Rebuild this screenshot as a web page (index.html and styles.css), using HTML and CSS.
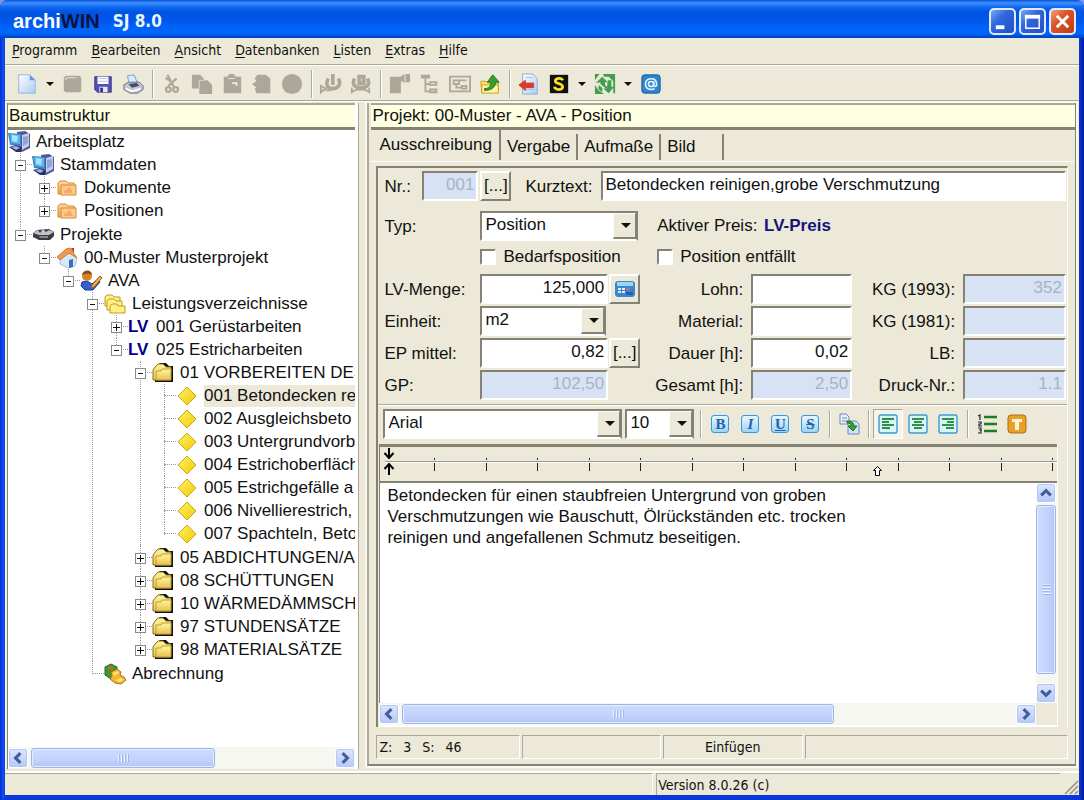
FILE: index.html
```
<!DOCTYPE html>
<html lang="de">
<head>
<meta charset="utf-8">
<title>archiWIN SJ 8.0</title>
<link rel="stylesheet" href="styles.css">
</head>
<body>
<svg class="defs" aria-hidden="true">
  <defs>
    <linearGradient id="gPaper" x1="0" y1="0" x2="1" y2="1"><stop offset="0" stop-color="#ffffff"/><stop offset="1" stop-color="#a9cdf5"/></linearGradient>
    <linearGradient id="gFolder" x1="0" y1="0" x2="0" y2="1"><stop offset="0" stop-color="#fff6a0"/><stop offset="1" stop-color="#e6c250"/></linearGradient>
    <linearGradient id="gOrange" x1="0" y1="0" x2="0" y2="1"><stop offset="0" stop-color="#ffd9a0"/><stop offset="1" stop-color="#f0a050"/></linearGradient>
    <linearGradient id="gDiamond" x1="0" y1="0" x2="1" y2="1"><stop offset="0" stop-color="#fff06a"/><stop offset="1" stop-color="#f0cc00"/></linearGradient>
    <symbol id="computer" viewBox="0 0 22 22">
      <path d="M9 1l8-1 5 3v14l-8 4-4-2z" fill="#4c5896"/><path d="M14 4l7-2v13l-7 4z" fill="#c3cdec"/><path d="M15 6l5-1v7l-5 3z" fill="#94a2d6"/>
      <path d="M0 2l13 1v12L2 14z" fill="#3a86c6"/><path d="M2 3l10 1v9L3 12z" fill="#58b8ee"/><path d="M4 4l6 1-1 6-5-1z" fill="#a9e4ff"/>
      <path d="M1 16l7-2 6 3-1 4H8z" fill="#28306a"/><path d="M3 16l5-1 4 2-4 2z" fill="#a3b0dc"/>
    </symbol>
    <symbol id="folderOrange" viewBox="0 0 22 22">
      <path d="M2 17V6l2-2h6l2 2h6l1 2v9z" fill="url(#gOrange)" stroke="#d98a35"/><path d="M5 8h15v10H5z" fill="#ffc98a" stroke="#d98a35"/><path d="M8 14l6-4 3 6H8z" fill="#f3aa70"/>
    </symbol>
    <symbol id="folderDark" viewBox="0 0 22 22">
      <path d="M3 20V9l3-6 2-2h6l3 3h4v16z" fill="#111"/>
      <path d="M1 18V8l3-4 2-2h5l3 3h5v4l-1 9z" fill="url(#gFolder)" stroke="#8a6d18"/><path d="M4 18V9h5l1-2h9v11z" fill="url(#gFolder)" stroke="#c49c2c"/>
    </symbol>
    <symbol id="diamond" viewBox="0 0 22 22"><path d="M11 2l9 9-9 9-9-9z" fill="url(#gDiamond)" stroke="#cfa510"/></symbol>
    <symbol id="chev" viewBox="0 0 10 10"><path d="M3 1l4 4-4 4" fill="none" stroke="#3f5f9a" stroke-width="2.6"/></symbol>
  </defs>
</svg>

<div class="window">
  <header class="titlebar">
    <h1 class="brand">archi<span class="brand-dark">WIN</span></h1>
    <span class="brand-version">SJ 8.0</span>
    <div class="window-buttons">
      <button class="winbtn" aria-label="Minimieren"><svg viewBox="0 0 24 24"><path d="M5 16h9v4H5z" fill="#fff"/></svg></button>
      <button class="winbtn" aria-label="Maximieren"><svg viewBox="0 0 24 24"><path d="M5 6h14v13H5z" fill="none" stroke="#fff" stroke-width="1.5"/><path d="M4 5h16v4H4z" fill="#fff"/></svg></button>
      <button class="winbtn winbtn-close" aria-label="Schließen"><svg viewBox="0 0 24 24"><path d="M6 6l12 12M18 6L6 18" stroke="#fff" stroke-width="3"/></svg></button>
    </div>
  </header>

  <nav class="menubar">
    <button><u>P</u>rogramm</button>
    <button><u>B</u>earbeiten</button>
    <button><u>A</u>nsicht</button>
    <button><u>D</u>atenbanken</button>
    <button><u>L</u>isten</button>
    <button><u>E</u>xtras</button>
    <button><u>H</u>ilfe</button>
  </nav>

  <div class="toolbar" role="toolbar" aria-label="Hauptleiste">
    <button aria-label="Neu"><svg viewBox="0 0 24 24"><path d="M3 2h12l6 6v14H3z" fill="url(#gPaper)" stroke="#8fb2e0"/><path d="M15 2v6h6z" fill="#5c9be8"/></svg></button>
    <button class="drop" aria-label="Neu Auswahl"></button>
    <button disabled aria-label="Öffnen"><svg viewBox="0 0 24 24"><path d="M4 3h15l2 2v15l-2 1H4l-2-2V5z" fill="#aca899"/><path d="M4 8V6l3-1h9" fill="none" stroke="#d8d4c4" stroke-width="1.5"/></svg></button>
    <button aria-label="Speichern"><svg viewBox="0 0 24 24"><path d="M3 4h18v17H6l-3-3z" fill="#5450b0" stroke="#3a3790"/><path d="M6 4h12v8H6z" fill="#fff"/><path d="M7 6h10M7 9h10" stroke="#b9bce8"/><path d="M8 15h9v6H8z" fill="#e4e6f4"/><path d="M9 16h3v5H9z" fill="#38348c"/></svg></button>
    <button aria-label="Drucken"><svg viewBox="0 0 24 24"><path d="M6 3l7-1 4 9-9 2z" fill="#d9ecff" stroke="#6a9fd8"/><path d="M2 13l5-3 12 0 4 4v4l-6 4H9l-7-4z" fill="#c5c5d2" stroke="#666a80"/><path d="M7 12l9-1 3 3-8 2z" fill="#4a4c60"/><path d="M4 17l7 3 9-3" fill="none" stroke="#fff" stroke-width="2"/></svg></button>
    <i class="sep"></i>
    <button disabled aria-label="Ausschneiden"><svg viewBox="0 0 24 24" fill="none" stroke="#aca899" stroke-width="2.4"><path d="M7 2l7 13M17 6l-9 8"/><circle cx="8" cy="18" r="2.6"/><circle cx="16" cy="18" r="2.6"/><path d="M5 5l5 4"/></svg></button>
    <button disabled aria-label="Kopieren"><svg viewBox="0 0 24 24" fill="#aca899"><path d="M1 2h9l4 4v11H1z"/><path d="M9 8h9l5 5v10H9z"/><path d="M9 17V8h5" fill="none" stroke="#dedac9"/></svg></button>
    <button disabled aria-label="Einfügen"><svg viewBox="0 0 24 24" fill="#aca899"><path d="M3 4h4l2-3h5l2 3h6v18H3z"/><path d="M8 6h7" stroke="#ece9d8"/><path d="M12 11h5v3" fill="none" stroke="#ece9d8" stroke-width="2"/></svg></button>
    <button disabled aria-label="Verschieben"><svg viewBox="0 0 24 24" fill="#aca899"><path d="M7 2h9l5 4v16H6l-2-5 2-1-5-4 5-3-2-3z"/></svg></button>
    <button disabled aria-label="Löschen"><svg viewBox="0 0 24 24"><circle cx="12" cy="12" r="11" fill="#aca899"/></svg></button>
    <i class="sep"></i>
    <button disabled aria-label="Verbinden"><svg viewBox="0 0 24 24" fill="none" stroke="#aca899" stroke-width="4"><path d="M14 1v12M9 6c-4 9 1 11 5 11s10-3 6-11"/><path d="M1 14v7l5-4zM6 19h6" stroke-width="2"/></svg></button>
    <button disabled aria-label="Trennen"><svg viewBox="0 0 24 24" fill="none" stroke="#aca899" stroke-width="4"><path d="M10 4h5v7h-5zM5 6c-4 8 2 10 7 10s11-2 7-10"/><path d="M2 16v5l5-3h9l5 3v-5" stroke-width="2"/></svg></button>
    <i class="sep"></i>
    <button disabled aria-label="Eigenschaften"><svg viewBox="0 0 24 24" fill="#aca899"><path d="M1 4h12v18H1zM11 5l6-4v10l-5-3zM18 1h5v9h-5z"/></svg></button>
    <button disabled aria-label="Baum"><svg viewBox="0 0 24 24" fill="none" stroke="#aca899" stroke-width="2"><path d="M3 3h8v2H3zM7 5v15h4M7 12h4M12 10h7v3h-7zM12 18h7v3h-7z"/></svg></button>
    <button disabled aria-label="Struktur"><svg viewBox="0 0 24 24" fill="none" stroke="#aca899" stroke-width="2"><path d="M1 4h22v16H1zM5 8h6v4H5zM14 14h5v3h-5zM8 12v4h6M11 8h8"/></svg></button>
    <button aria-label="Übergeordnet"><svg viewBox="0 0 24 24"><path d="M2 9h6l2 2h11v10H3z" fill="#ffe46a" stroke="#c89a1c"/><path d="M3 13h18v9H3z" fill="#fff2a0" stroke="#c89a1c"/><path d="M6 17c5 0 7-3 7-7H9l6-8 7 8h-4c0 6-5 9-12 9z" fill="#36a02c" stroke="#1f741b"/></svg></button>
    <i class="sep"></i>
    <button aria-label="Beenden"><svg viewBox="0 0 24 24"><path d="M5 1h11l5 5v17H5z" fill="url(#gPaper)" stroke="#93a9cf"/><path d="M8 5h8M8 18h9" stroke="#a7b9dc"/><path d="M1 13l7-5v3h9v5H8v3z" fill="#e03a28" stroke="#c84030"/></svg></button>
    <button aria-label="Sirados"><svg viewBox="0 0 24 24"><path d="M2 2h20v20H2z" fill="#111"/><path d="M16 8c-1-3-8-3-8 1 0 3 8 2 8 6s-8 4-9 0" fill="none" stroke="#f7e02c" stroke-width="3"/></svg></button>
    <button class="drop" aria-label="Sirados Auswahl"></button>
    <button aria-label="Aktualisieren"><svg viewBox="0 0 24 24" fill="#3f9e50"><path d="M1 1h5L1 8zM10 1h13v21h-2V9l-5-5h-5zM1 23V13l4 6 6 4z"/><path d="M2 11l7-7 6 6h-3v3l4 4h-3l-6-5v-2z"/><path d="M15 8h4v7h3l-6 7-6-5h4z"/><path d="M5 13v5l4 3V16z"/></svg></button>
    <button class="drop" aria-label="Aktualisieren Auswahl"></button>
    <button aria-label="Internet"><svg viewBox="0 0 24 24"><rect x="2" y="2" width="20" height="20" rx="3" fill="#2d86cd" stroke="#17548f"/><path d="M15 9v4c0 3 4 2 3-2-1-7-12-6-12 1 0 6 6 7 10 5" fill="none" stroke="#e3f4ff" stroke-width="1.7"/><circle cx="12" cy="12" r="2.8" fill="none" stroke="#e3f4ff" stroke-width="1.7"/></svg></button>
  </div>

  <main class="workspace">
    <section class="treepane">
      <h2 class="panehead">Baumstruktur</h2>
      <div class="treeview">
        <ul class="tree root">
          <li class="open">
            <div class="row"><svg class="ico"><use href="#computer"/></svg><span>Arbeitsplatz</span></div>
            <ul>
              <li class="open">
                <div class="row"><button class="exp" aria-label="Zuklappen"></button><svg class="ico"><use href="#computer"/></svg><span>Stammdaten</span></div>
                <ul>
                  <li><div class="row"><button class="exp plus" aria-label="Aufklappen"></button><svg class="ico"><use href="#folderOrange"/></svg><span>Dokumente</span></div></li>
                  <li><div class="row"><button class="exp plus" aria-label="Aufklappen"></button><svg class="ico"><use href="#folderOrange"/></svg><span>Positionen</span></div></li>
                </ul>
              </li>
              <li class="open">
                <div class="row"><button class="exp" aria-label="Zuklappen"></button><svg class="ico" viewBox="0 0 22 22"><path d="M1 9l4-3 12-1 5 3v4l-4 4H7l-6-3z" fill="#3c3c40"/><path d="M1 9l5-3 2 3 3-4 3 3 3-2 5 2-5 3H7z" fill="#c0c0c5"/><path d="M7 12h9v2H8z" fill="#85858c"/></svg><span>Projekte</span></div>
                <ul>
                  <li class="open">
                    <div class="row"><button class="exp" aria-label="Zuklappen"></button><svg class="ico" viewBox="0 0 22 22"><path d="M4 11l9-7 8 8-2 7-7 2-8-4z" fill="#d6e8fb" stroke="#a8c0e0"/><path d="M13 13l4-1v8l-4 1z" fill="#3f6cb4"/><path d="M1 10l9-8 4-1 7 10-8-5-9 7z" fill="#f09a50" stroke="#d8782c"/><path d="M15 1h3v5z" fill="#c23c20"/></svg><span>00-Muster Musterprojekt</span></div>
                    <ul>
                      <li class="open">
                        <div class="row"><button class="exp" aria-label="Zuklappen"></button><svg class="ico" viewBox="0 0 22 22"><path d="M2 12l5-1 5 3 6-5 2 3-7 8H5l-4-4z" fill="#2f62d0" stroke="#1b3d90"/><circle cx="7" cy="6" r="5" fill="#d9822c"/><path d="M2 5c1-6 10-6 10 0-4-2-7-1-10 0z" fill="#8a4a14"/><path d="M12 15l8-9 2 2-8 9-3 1z" fill="#f2b63a" stroke="#a2561a"/></svg><span>AVA</span></div>
                        <ul>
                          <li class="open">
                            <div class="row"><button class="exp" aria-label="Zuklappen"></button><svg class="ico" viewBox="0 0 22 22"><g fill="#fff08a" stroke="#c09a18"><path d="M1 13V4l2-2h5l2 2h6v9z"/><path d="M3 17V8l2-2h5l2 2h6v9z"/><path d="M6 20v-7l2-2h5l1 2h7v7z"/></g></svg><span>Leistungsverzeichnisse</span></div>
                            <ul>
                              <li><div class="row"><button class="exp plus" aria-label="Aufklappen"></button><b class="lv">LV</b><span>001 Gerüstarbeiten</span></div></li>
                              <li class="open">
                                <div class="row"><button class="exp" aria-label="Zuklappen"></button><b class="lv">LV</b><span>025 Estricharbeiten</span></div>
                                <ul>
                                  <li class="open">
                                    <div class="row"><button class="exp" aria-label="Zuklappen"></button><svg class="ico"><use href="#folderDark"/></svg><span>01 VORBEREITEN DES</span></div>
                                    <ul>
                                      <li><div class="row leaf"><svg class="ico"><use href="#diamond"/></svg><span class="selected">001 Betondecken re</span></div></li>
                                      <li><div class="row leaf"><svg class="ico"><use href="#diamond"/></svg><span>002 Ausgleichsbeto</span></div></li>
                                      <li><div class="row leaf"><svg class="ico"><use href="#diamond"/></svg><span>003 Untergrundvorbe</span></div></li>
                                      <li><div class="row leaf"><svg class="ico"><use href="#diamond"/></svg><span>004 Estrichoberfläch</span></div></li>
                                      <li><div class="row leaf"><svg class="ico"><use href="#diamond"/></svg><span>005 Estrichgefälle a</span></div></li>
                                      <li><div class="row leaf"><svg class="ico"><use href="#diamond"/></svg><span>006 Nivellierestrich,</span></div></li>
                                      <li><div class="row leaf"><svg class="ico"><use href="#diamond"/></svg><span>007 Spachteln, Beto</span></div></li>
                                    </ul>
                                  </li>
                                  <li><div class="row"><button class="exp plus" aria-label="Aufklappen"></button><svg class="ico"><use href="#folderDark"/></svg><span>05 ABDICHTUNGEN/AB</span></div></li>
                                  <li><div class="row"><button class="exp plus" aria-label="Aufklappen"></button><svg class="ico"><use href="#folderDark"/></svg><span>08 SCHÜTTUNGEN</span></div></li>
                                  <li><div class="row"><button class="exp plus" aria-label="Aufklappen"></button><svg class="ico"><use href="#folderDark"/></svg><span>10 WÄRMEDÄMMSCH</span></div></li>
                                  <li><div class="row"><button class="exp plus" aria-label="Aufklappen"></button><svg class="ico"><use href="#folderDark"/></svg><span>97 STUNDENSÄTZE</span></div></li>
                                  <li><div class="row"><button class="exp plus" aria-label="Aufklappen"></button><svg class="ico"><use href="#folderDark"/></svg><span>98 MATERIALSÄTZE</span></div></li>
                                </ul>
                              </li>
                            </ul>
                          </li>
                          <li><div class="row leaf"><svg class="ico" viewBox="0 0 22 22"><path d="M1 4l6-3 6 3v8l-6 4-6-4z" fill="#3f9a34" stroke="#1f6a1c"/><path d="M3 5l4-2 3 2-3 2z" fill="#d9622c"/><path d="M7 9l6-3 4 3-1 3 4 2 2 3-5 4-6-1-5-4 2-3z" fill="#f2b632" stroke="#a4701a"/><path d="M9 10l4-2 2 2-5 3zM12 17l5-2 3 2-5 2z" fill="#ffe27a"/></svg><span>Abrechnung</span></div></li>
                        </ul>
                      </li>
                    </ul>
                  </li>
                </ul>
              </li>
            </ul>
          </li>
        </ul>
      </div>
      <div class="scroll-h">
        <button class="sb" aria-label="Nach links"><svg class="left"><use href="#chev"/></svg></button>
        <div class="track"><div class="thumb thumb-tree"><i class="gripper"></i></div></div>
        <button class="sb" aria-label="Nach rechts"><svg><use href="#chev"/></svg></button>
      </div>
    </section>

    <section class="mainpane">
      <h2 class="panehead">Projekt: 00-Muster - AVA - Position</h2>
      <div class="frame">
        <div class="tabs" role="tablist">
          <button role="tab" aria-selected="true" class="tab active">Ausschreibung</button>
          <button role="tab" class="tab">Vergabe</button>
          <button role="tab" class="tab">Aufmaße</button>
          <button role="tab" class="tab tab-wide">Bild</button>
        </div>
        <div class="page">
          <div class="sheet">
            <form class="form">
              <div class="nrline">
                <label class="nrlabel" for="nr">Nr.:</label>
                <input class="field nr num" id="nr" value="001" disabled>
                <button type="button" class="more" aria-label="Nummer wählen">[...]</button>
                <label class="kurzlabel" for="kurz">Kurztext:</label>
                <input class="field kurz" id="kurz" value="Betondecken reinigen,grobe Verschmutzung">
              </div>
              <div class="fields">
                <label for="typ">Typ:</label>
                <span class="combo"><select class="field" id="typ"><option>Position</option></select></span>
                <p class="wide">Aktiver Preis: <b>LV-Preis</b></p>
              </div>
              <div class="fields checks">
                <label class="check check-first"><input type="checkbox">Bedarfsposition</label>
                <label class="check wide"><input type="checkbox">Position entfällt</label>
              </div>
              <div class="fields">
                <label for="menge">LV-Menge:</label>
                <span class="pair"><input class="field num" id="menge" value="125,000"><button type="button" class="more" aria-label="Rechner"><svg viewBox="0 0 22 22"><path d="M1 5l2-2h16l2 2v12l-2 2H3l-2-2z" fill="#3b87cc"/><path d="M3 4h16v4H3z" fill="#9fd4f5"/><g fill="#d9efff"><path d="M4 10h3v2H4zM8 10h3v2H8zM4 13h3v2H4zM8 13h3v2H8z"/></g><path d="M12 10h4v2h-4z" fill="#d06080"/><path d="M12 14h7v3h-7z" fill="#2560a8"/></svg></button></span>
                <label class="r" for="lohn">Lohn:</label><input class="field num" id="lohn">
                <label class="r" for="kg93">KG (1993):</label><input class="field num" id="kg93" value="352" disabled>

                <label for="einheit">Einheit:</label>
                <span class="combo combo-short"><select class="field" id="einheit"><option>m2</option></select></span>
                <label class="r" for="material">Material:</label><input class="field num" id="material">
                <label class="r" for="kg81">KG (1981):</label><input class="field num" id="kg81" disabled>

                <label for="ep">EP mittel:</label>
                <span class="pair"><input class="field num" id="ep" value="0,82"><button type="button" class="more" aria-label="EP wählen">[...]</button></span>
                <label class="r" for="dauer">Dauer [h]:</label><input class="field num" id="dauer" value="0,02">
                <label class="r" for="lb">LB:</label><input class="field num" id="lb" disabled>

                <label for="gp">GP:</label>
                <span class="pair pair-single"><input class="field num" id="gp" value="102,50" disabled></span>
                <label class="r" for="gesamt">Gesamt [h]:</label><input class="field num" id="gesamt" value="2,50" disabled>
                <label class="r" for="druck">Druck-Nr.:</label><input class="field num" id="druck" value="1.1" disabled>
              </div>
            </form>

            <div class="formatbar" role="toolbar" aria-label="Format">
              <span class="combo combo-font"><select class="field" aria-label="Schriftart"><option>Arial</option></select></span>
              <span class="combo combo-size"><select class="field" aria-label="Schriftgröße"><option>10</option></select></span>
              <i class="sep"></i>
              <button class="letter" aria-label="Fett"><b>B</b></button>
              <button class="letter" aria-label="Kursiv"><em>I</em></button>
              <button class="letter" aria-label="Unterstrichen"><u>U</u></button>
              <button class="letter" aria-label="Durchgestrichen"><s>S</s></button>
              <i class="sep"></i>
              <button aria-label="Text übernehmen"><svg viewBox="0 0 22 22"><path d="M2 1h6l3 3v7H2z" fill="#e8f0ff" stroke="#6f86c0"/><path d="M4 5h5M4 8h5" stroke="#6f86c0"/><path d="M10 8h8l3 3v10H10z" fill="#cfe3fa" stroke="#6f86c0"/><path d="M9 8c5 0 7 2 7 5h3l-4 5-5-5h3c0-2-1-3-4-3z" fill="#37a030" stroke="#1f7420"/></svg></button>
              <i class="sep"></i>
              <button class="pressed" aria-label="Linksbündig"><svg viewBox="0 0 22 22"><rect x="2" y="2" width="18" height="18" rx="2" fill="#d9f4fb" stroke="#3a9cd0" stroke-width="1.4"/><path d="M5 6h12M5 9h7M5 12h12M5 15h8" stroke="#2a9442" stroke-width="1.8"/></svg></button>
              <button aria-label="Zentriert"><svg viewBox="0 0 22 22"><rect x="2" y="2" width="18" height="18" rx="2" fill="#d9f4fb" stroke="#3a9cd0" stroke-width="1.4"/><path d="M5 6h12M7 9h8M5 12h12M7 15h8" stroke="#2a9442" stroke-width="1.8"/></svg></button>
              <button aria-label="Rechtsbündig"><svg viewBox="0 0 22 22"><rect x="2" y="2" width="18" height="18" rx="2" fill="#d9f4fb" stroke="#3a9cd0" stroke-width="1.4"/><path d="M5 6h12M10 9h7M5 12h12M9 15h8" stroke="#2a9442" stroke-width="1.8"/></svg></button>
              <i class="sep"></i>
              <button aria-label="Nummerierung"><svg viewBox="0 0 22 22"><path d="M8 4h13M8 11h13M8 18h13" stroke="#1f7a24" stroke-width="2.4"/><path d="M2 3l2-1v5M2 9h3v2H3v2h3M2 15h3v5H2M3 17h2" fill="none" stroke="#1c2440" stroke-width="1.2"/></svg></button>
              <button aria-label="Textbaustein"><svg viewBox="0 0 22 22"><rect x="2" y="2" width="18" height="18" rx="3" fill="#e8a02c" stroke="#b06c10"/><path d="M6 6h10v3h-3v8H9V9H6z" fill="#fff3cf"/></svg></button>
            </div>

            <div class="editor">
              <div class="ruler">
                <svg viewBox="0 0 678 34" preserveAspectRatio="xMinYMid slice" aria-hidden="true">
                  <path d="M5 14.500h673" stroke="#9a978a"/><path d="M5 15.500h673" stroke="#fff"/>
                  <path d="M54.500 11v2M106.500 11v2M157.500 11v2M209.500 11v2M260.500 11v2M312.500 11v2M363.500 11v2M415.500 11v2M466.500 11v2M518.500 11v2M569.500 11v2M621.500 11v2M672.500 11v2M54.500 16v8M106.500 16v8M157.500 16v8M209.500 16v8M260.500 16v8M312.500 16v8M363.500 16v8M415.500 16v8M466.500 16v8M518.500 16v8M569.500 16v8M621.500 16v8M672.500 16v8" stroke="#222"/>
                  <path d="M9 1v10M4.500 6l4.500 5 4.500-5M9 28V18M4.500 22l4.500-5 4.500 5" fill="none" stroke="#000" stroke-width="2"/>
                  <path d="M493.500 23.500l4-4 4 4h-2v5h-4v-5z" fill="#fff" stroke="#000"/>
                </svg>
              </div>
              <div class="editbody">
                <textarea class="text" aria-label="Langtext" spellcheck="false" wrap="off">Betondecken für einen staubfreien Untergrund von groben
Verschmutzungen wie Bauschutt, Ölrückständen etc. trocken
reinigen und angefallenen Schmutz beseitigen.</textarea>
                <div class="scroll-v">
                  <button class="sb" aria-label="Nach oben"><svg class="up"><use href="#chev"/></svg></button>
                  <div class="track"><div class="thumb"><i class="gripper"></i></div></div>
                  <button class="sb" aria-label="Nach unten"><svg class="down"><use href="#chev"/></svg></button>
                </div>
              </div>
              <div class="scroll-h scroll-text">
                <button class="sb" aria-label="Nach links"><svg class="left"><use href="#chev"/></svg></button>
                <div class="track"><div class="thumb thumb-text"><i class="gripper"></i></div></div>
                <button class="sb" aria-label="Nach rechts"><svg><use href="#chev"/></svg></button>
              </div>
            </div>
          </div>
          <div class="editstatus">
            <span class="cell cell-pos"><span>Z:</span><span>3</span><span>S:</span><span>46</span></span>
            <span class="cell"></span>
            <span class="cell cell-mode">Einfügen</span>
            <span class="cell cell-rest"></span>
          </div>
        </div>
      </div>
    </section>
  </main>

  <footer class="statusbar">
    <span class="stat-left"></span>
    <span class="stat-right">Version 8.0.26 (c)</span>
    <svg class="grip" viewBox="0 0 16 16" aria-hidden="true"><path d="M2 15L15 2M7 15l8-8M12 15l3-3" stroke="#9a917c" stroke-width="1.6"/></svg>
  </footer>
</div>
</body>
</html>
```
FILE: styles.css
```
:root {
  --face: #ece9d8;
  --shadow: #aca899;
  --dark: #858174;
  --off: #d7e3f5;
  --ui: "DejaVu Sans Condensed", "Noto Sans", sans-serif;
}

* { box-sizing: border-box; }

body {
  margin: 0;
  font: 17px/20px "Liberation Sans", Arial, sans-serif;
  color: #111;
  background: #8b8fe0;
}

button, input, select, textarea { font: inherit; color: inherit; }
button { padding: 0; border: 0; background: none; }
h1, h2, p, ul { margin: 0; padding: 0; }
ul { list-style: none; }
.defs { position: absolute; width: 0; height: 0; }

.window {
  display: flex;
  flex-direction: column;
  height: 100vh;
  min-height: 720px;
  padding: 0 5px 5px;
  background: linear-gradient(90deg, #0a28d8, #0a50ee 3px, #0a50ee 4px, #0838d8 5px, #0838d8 calc(100% - 5px), #0a34d0 calc(100% - 4px), #001a9c);
  border-radius: 8px 8px 0 0;
}

/* Title bar */
.titlebar {
  display: flex;
  align-items: center;
  flex: none;
  height: 38px;
  margin: 0 -5px;
  padding: 4px 8px 0 13px;
  border-radius: 8px 8px 0 0;
  background: linear-gradient(#0a50d8, #3c90ff 3px, #1068f0 7px, #0054e3 12px, #0056e8 20px, #0066ff 30px, #0062f8 34px, #0040b8);
}
.brand { font-size: 20px; line-height: 20px; color: #fff; }
.brand-dark { color: #0a1440; }
.brand-version { margin-left: 13px; font: bold 17px/20px var(--ui); color: #e8f6ff; }
.window-buttons { display: flex; gap: 3px; margin-left: auto; }
.winbtn {
  width: 27px;
  height: 27px;
  border: 2px solid #dfe9ff;
  border-radius: 5px;
  background: linear-gradient(135deg, #7ba4f4, #2f66dc 40%, #2350c4);
}
.winbtn svg { display: block; width: 23px; height: 23px; }
.winbtn-close { background: linear-gradient(135deg, #f0a080, #dc5428 40%, #c03c14); }

/* Menu and toolbar */
.menubar {
  display: flex;
  flex: none;
  gap: 14px;
  height: 28px;
  padding: 0 7px 3px;
  background: var(--face);
  border-bottom: 1px solid #fff;
  box-shadow: inset 0 -1px var(--shadow);
  font: 14px/18px var(--ui);
}
.menubar u { text-underline-offset: 2px; }
.toolbar {
  display: flex;
  align-items: center;
  flex: none;
  height: 36px;
  padding: 0 7px;
  background: var(--face);
  border-bottom: 1px solid #fff;
  box-shadow: inset 0 -1px var(--shadow);
}
.toolbar button { flex: none; width: 30px; height: 30px; }
.toolbar button svg { display: block; width: 22px; height: 22px; margin: 0 auto; }
.toolbar .drop { width: 16px; }
.drop::before {
  content: "";
  display: block;
  width: 0;
  margin: 0 auto;
  border: 4px solid transparent;
  border-top-color: #111;
  border-bottom: 0;
}
.sep {
  flex: none;
  width: 9px;
  height: 28px;
  background: linear-gradient(90deg, transparent 4px, var(--shadow) 4px, var(--shadow) 5px, #fff 5px, #fff 6px, transparent 6px);
}

/* Panes */
.workspace {
  display: flex;
  flex: 1;
  min-height: 0;
  padding: 1px 0 2px;
  background: var(--face);
}
.panehead {
  flex: none;
  height: 27px;
  padding: 0 1px;
  background: #ffffe1;
  border-top: 2px solid var(--shadow);
  border-bottom: 3px solid var(--dark);
  font-size: 17px;
  font-weight: normal;
  line-height: 22px;
}
.treepane {
  display: flex;
  flex-direction: column;
  flex: 0 0 33%;
  min-width: 0;
  padding-right: 3px;
  border-left: 2px solid #f6f4ea;
  box-shadow: inset 1px 0 var(--dark);
  padding-left: 1px;
  background: #fff;
  border-right: 1px solid var(--shadow);
}
.treeview { flex: 1; min-height: 0; overflow: hidden; background: #fff; }
.mainpane {
  display: flex;
  flex-direction: column;
  flex: 1;
  min-width: 0;
  margin: 0 3px 3px 8px;
  padding-left: 2px;
  border-left: 2px solid var(--shadow);
  border-right: 1px solid var(--dark);
  border-bottom: 2px solid var(--dark);
  outline: 2px solid #faf8f0;
}

/* Tree */
.tree ul ul { padding-left: 24px; }
.tree li { position: relative; }
.tree li.open + li { padding-top: 1px; }
.tree ul li::before {
  content: "";
  position: absolute;
  top: 0;
  bottom: 0;
  left: 12px;
  border-left: 1px dotted #999;
}
.tree ul li:last-child::before { bottom: auto; height: 13px; }
.row { display: flex; align-items: center; height: 23px; white-space: nowrap; }
.tree ul .row::before {
  content: "";
  position: absolute;
  left: 12px;
  width: 12px;
  border-top: 1px dotted #999;
}
.row .ico, .row .lv { flex: none; width: 22px; height: 22px; margin-right: 6px; }
.row .lv { color: #00008b; line-height: 22px; }
.row.leaf { padding-left: 24px; }
.exp {
  position: relative;
  flex: none;
  width: 11px;
  height: 11px;
  margin: 2px 6px 0 7px;
  border: 1px solid #8a8a8a;
  background: linear-gradient(#111, #111) center / 5px 1px no-repeat #fff;
}
.exp.plus {
  background: linear-gradient(#111, #111) center / 7px 1px no-repeat, linear-gradient(#111, #111) center / 1px 7px no-repeat, #fff;
}
.selected { flex: 1; background: #ece9d8; line-height: 22px; }

/* Scroll bars */
.scroll-h { display: flex; flex: none; height: 22px; padding: 1px 0; background: #f7f7f2; }
.scroll-v { display: flex; flex-direction: column; flex: none; width: 21px; background: #f7f7f2; }
.sb {
  flex: none;
  width: 20px;
  height: 20px;
  border: 1px solid #fff;
  border-radius: 3px;
  background: linear-gradient(#dce6fe, #b5c8f8);
  box-shadow: inset 0 0 0 1px #b4c6f4;
}
.sb svg { display: block; width: 12px; height: 12px; margin: 0 auto; }
.sb .left { transform: rotate(180deg); }
.sb .up { transform: rotate(-90deg); }
.sb .down { transform: rotate(90deg); }
.track { flex: 1; min-height: 0; min-width: 0; }
.thumb {
  display: flex;
  align-items: center;
  justify-content: center;
  height: 100%;
  border: 1px solid #9fb5ea;
  border-radius: 3px;
  background: linear-gradient(#cfdcfe, #c2d2fd 60%, #b2c6f6);
  box-shadow: inset 0 0 0 1px #e4ecff;
}
.gripper {
  width: 11px;
  height: 8px;
  background: repeating-linear-gradient(90deg, #eef4ff 0, #eef4ff 1px, #a2b6e6 1px, #a2b6e6 2px, transparent 2px, transparent 3px);
}
.thumb-tree { width: 60%; margin-left: 3px; }
.thumb-text { width: 70%; margin-left: 3px; }
.scroll-v .track { padding: 2px 1px 0 0; }
.scroll-v .thumb { height: 95%; background: linear-gradient(90deg, #cfdcfe, #c2d2fd 60%, #b2c6f6); }
.scroll-v .gripper { transform: rotate(90deg); }

/* Tabs */
.frame {
  display: flex;
  flex-direction: column;
  flex: 1;
  min-height: 0;
  padding-right: 1px;
}
.tabs { display: flex; align-items: flex-end; flex: none; height: 31px; padding-bottom: 1px; }
.tab { height: 26px; padding: 0 6px; border-right: 2px solid var(--dark); line-height: 26px; }
.tab.active { height: 30px; padding: 0 7px 0 8px; }
.tab-wide { padding-right: 26px; }
.page {
  display: flex;
  flex-direction: column;
  flex: 1;
  min-height: 0;
  padding: 4px 6px 5px 5px;
  border-top: 1px solid #fff;
}
.sheet {
  display: flex;
  flex-direction: column;
  flex: 1;
  min-height: 0;
  border-top: 2px solid var(--dark);
  border-left: 2px solid var(--dark);
  border-right: 1px solid #fff;
}

/* Form */
.form { padding: 3px 1px 4px 6px; border-bottom: 1px solid var(--shadow); }
.field {
  width: 100%;
  min-width: 0;
  height: 30px;
  margin: 0;
  padding: 0 3px 2px;
  border: 2px solid #fff;
  border-top-color: var(--dark);
  border-left-color: var(--dark);
  border-radius: 0;
  outline: 0;
  background: #fff;
}
.field:disabled { background: var(--off); color: #a9b2c2; -webkit-text-fill-color: #a9b2c2; opacity: 1; }
.num { text-align: right; padding-right: 2px; }
.nrline { display: flex; align-items: center; margin-bottom: 10px; }
.nrlabel { width: 38px; padding-top: 2px; }
.nr { width: 56px; flex: none; margin-right: 2px; }
.kurzlabel { margin: 0 8px 0 14px; padding-top: 2px; }
.kurz { flex: 1; }
.more {
  flex: none;
  width: 31px;
  height: 30px;
  border: 2px solid #fff;
  border-right-color: var(--dark);
  border-bottom-color: var(--dark);
  background: var(--face);
}
.more svg { display: block; width: 22px; height: 22px; margin: 0 auto; }
.fields {
  display: grid;
  grid-template-columns: 88px minmax(0, 160fr) 95px minmax(0, 101fr) 95px minmax(0, 103fr);
  gap: 2px 8px;
  align-items: center;
}
.fields > label { padding-top: 2px; }
.fields .r { text-align: right; }
.fields .wide { grid-column: 3 / -1; padding-left: 9px; }
.fields b { margin-left: 2px; color: #14147c; }
.checks { margin: 6px 0 7px; }
.check { display: flex; align-items: center; gap: 7px; }
.fields > .check { padding-top: 0; }
.check-first { grid-column: 2; }
.check input {
  appearance: none;
  width: 16px;
  height: 16px;
  margin: 0;
  border: 2px solid #fff;
  border-top-color: var(--dark);
  border-left-color: var(--dark);
  background: #fff;
}
.pair { display: flex; gap: 1px; }
.pair-single { padding-right: 32px; }
.combo { position: relative; display: block; margin-right: 2px; }
.combo-short { margin-right: 34px; }
.combo select { appearance: none; border: 2px solid var(--dark); border-bottom-color: #fff; }
.combo::after {
  content: "";
  position: absolute;
  top: 2px;
  right: 2px;
  bottom: 2px;
  width: 21px;
  border: 1px solid #fff;
  border-right: 1px solid var(--dark);
  border-bottom: 2px solid var(--dark);
  background: var(--face);
  pointer-events: none;
}
.combo::before {
  content: "";
  position: absolute;
  z-index: 1;
  top: 12px;
  right: 7px;
  border: 5px solid transparent;
  border-top-color: #111;
  border-bottom: 0;
  pointer-events: none;
}

/* Format bar */
.formatbar {
  display: flex;
  align-items: center;
  flex: none;
  height: 39px;
  padding: 0 5px 2px;
  border-top: 1px solid #fff;
}
.combo-font { width: 239px; }
.combo-size { width: 69px; margin-left: 1px; }
.formatbar > button {
  display: flex;
  align-items: center;
  justify-content: center;
  flex: none;
  width: 30px;
  height: 30px;
  border: 1px solid transparent;
}
.formatbar > button svg { width: 22px; height: 22px; }
.formatbar > .pressed { border-color: var(--shadow) #fff #fff var(--shadow); background: #f5f3ea; }
.letter > * {
  width: 18px;
  height: 18px;
  border: 1px solid #3a96d6;
  border-radius: 3px;
  background: linear-gradient(#e6f6ff, #9cd4f6);
  color: #2064a8;
  font-family: "Liberation Serif", serif;
  font-size: 15px;
  font-weight: bold;
  line-height: 16px;
}

/* Editor */
.editor {
  display: flex;
  flex-direction: column;
  flex: 1;
  min-height: 0;
  margin: 0 9px 0 1px;
  border-right: 1px solid #fff;
  border-bottom: 2px solid #fff;
}
.ruler {
  flex: none;
  height: 39px;
  border: 1px solid var(--dark);
  border-top-width: 3px;
  border-right: 0;
  border-bottom-width: 2px;
  overflow: hidden;
}
.ruler svg { display: block; width: 678px; height: 34px; }
.editbody { display: flex; flex: 1; min-height: 0; border-left: 1px solid var(--dark); }
.text {
  flex: 1;
  min-width: 0;
  padding: 2px 7px;
  border: 0;
  outline: 0;
  resize: none;
  overflow: hidden;
  background: #fff;
  line-height: 21px;
}
.scroll-text { margin-right: 21px; }

.editstatus {
  display: grid;
  grid-template-columns: 144fr 139fr 140fr 264fr;
  gap: 2px;
  flex: none;
  margin-top: 8px;
  height: 24px;
  font: 14px/22px var(--ui);
}
.cell { padding: 0 2px; border: 1px solid #fff; border-top-color: var(--shadow); border-left-color: var(--shadow); }
.cell-pos { display: flex; gap: 11px; }
.cell-mode { text-align: center; }

/* Status bar */
.statusbar {
  display: flex;
  flex: none;
  gap: 3px;
  height: 24px;
  background: var(--face);
  border-top: 2px solid #fff;
  font: 14px/22px var(--ui);
}
.stat-left { flex: 651; border-top: 1px solid var(--shadow); border-right: 1px solid #fff; }
.stat-right { flex: 404; border-top: 1px solid var(--shadow); border-left: 1px solid var(--shadow); padding-left: 1px; }
.grip { width: 16px; height: 16px; align-self: flex-end; }
```
